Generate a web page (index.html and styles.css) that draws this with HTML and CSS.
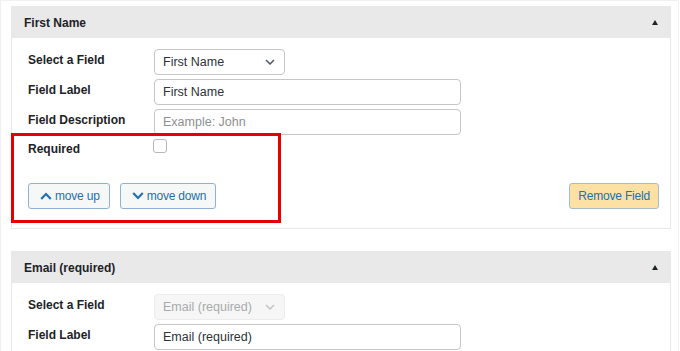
FILE: index.html
```html
<!DOCTYPE html>
<html lang="en">
<head>
<meta charset="utf-8">
<title>Form Fields</title>
<link rel="stylesheet" href="styles.css">
</head>
<body>
<div class="wrap">
  <section class="panel">
    <header class="panel-head">
      <h3 class="title">First Name</h3>
      <span class="toggle" aria-hidden="true"></span>
    </header>
    <div class="panel-body">
      <div class="fields">
        <label class="lbl">Select a Field</label>
        <div class="select"><span>First Name</span><svg class="chev" viewBox="0 0 10 6" width="10" height="6"><path d="M1 1 L5 5 L9 1" fill="none" stroke="#50575e" stroke-width="1.5"/></svg></div>
        <label class="lbl">Field Label</label>
        <div class="input">First Name</div>
        <label class="lbl">Field Description</label>
        <div class="input placeholder">Example: John</div>
        <label class="lbl lbl-req">Required</label>
        <div><span class="checkbox"></span></div>
      </div>
      <div class="actions">
        <div class="moves">
          <button class="btn"><svg viewBox="0 0 12 8" width="12" height="8"><path d="M1.2 7 L6 2 L10.8 7" fill="none" stroke="#2271b1" stroke-width="2.2"/></svg>move up</button>
          <button class="btn"><svg viewBox="0 0 12 8" width="12" height="8"><path d="M1.2 1 L6 6 L10.8 1" fill="none" stroke="#2271b1" stroke-width="2.2"/></svg>move down</button>
        </div>
        <button class="btn btn-remove">Remove Field</button>
      </div>
      <div class="highlight"></div>
    </div>
  </section>

  <section class="panel">
    <header class="panel-head">
      <h3 class="title">Email (required)</h3>
      <span class="toggle" aria-hidden="true"></span>
    </header>
    <div class="panel-body">
      <div class="fields">
        <label class="lbl">Select a Field</label>
        <div class="select disabled"><span>Email (required)</span><svg class="chev" viewBox="0 0 10 6" width="10" height="6"><path d="M1 1 L5 5 L9 1" fill="none" stroke="#c3c4c7" stroke-width="1.5"/></svg></div>
        <label class="lbl">Field Label</label>
        <div class="input">Email (required)</div>
      </div>
    </div>
  </section>
</div>
</body>
</html>
```

FILE: styles.css
```css
* { box-sizing: border-box; }
html, body { margin: 0; padding: 0; background: #fff; }
body {
  font-family: "Liberation Sans", Arial, sans-serif;
  font-size: 12px;
  color: #1d2327;
  overflow: hidden;
}
.wrap {
  width: 679px;
  border: 1px solid #f0f0f0;
  border-bottom: none;
  padding: 5px 7px 0 10px;
}
.panel {
  position: relative;
  border: 1px solid #e8e8e8;
  border-top: none;
  margin-bottom: 22px;
}
.panel-head {
  height: 32px;
  background: #e9e9e9;
  display: flex;
  align-items: center;
  justify-content: space-between;
  padding: 1px 12px 0 12px;
}
.title {
  margin: 0;
  font-size: 12px;
  font-weight: 700;
  color: #1d2327;
}
.toggle {
  width: 0; height: 0;
  border-left: 3px solid transparent;
  border-right: 3px solid transparent;
  border-bottom: 5px solid #1d2327;
  margin-right: 0;
}
.panel-body {
  padding: 11px 11px 19px 16px;
}
.fields {
  display: grid;
  grid-template-columns: 126px auto;
  row-gap: 4px;
  align-items: start;
  justify-items: start;
}
.lbl {
  font-weight: 700;
  line-height: 18px;
  padding-top: 2px;
  color: #1d2327;
}
.lbl-req { padding-top: 1px; }
.select, .input {
  height: 26px;
  border: 1px solid #c6c6c6;
  border-radius: 4px;
  background: #fff;
  color: #2c3338;
  font-size: 12.5px;
  display: flex;
  align-items: center;
  padding: 0 8px;
}
.select {
  width: 131px;
  justify-content: space-between;
  padding-right: 9px;
}
.select.disabled {
  background: #f6f6f6;
  border-color: #ececec;
  color: #a7aaad;
}
.input { width: 307px; }
.input.placeholder { color: #8c8f94; }
.checkbox {
  display: block;
  width: 14px;
  height: 14px;
  border: 1px solid #b8b8b8;
  border-radius: 3px;
  background: #fff;
  margin-left: -1px;
}
.actions {
  margin-top: 25px;
  display: flex;
  justify-content: space-between;
  align-items: center;
}
.moves { display: flex; gap: 10px; }
.btn {
  height: 26px;
  font-family: inherit;
  font-size: 12px;
  letter-spacing: -0.2px;
  color: #2271b1;
  background: #f6f7f7;
  border: 1px solid #8fb2d3;
  border-radius: 3px;
  padding: 0 9px 0 11px;
  display: flex;
  align-items: center;
  gap: 3px;
  cursor: pointer;
}
.btn svg { display: block; }
.btn-remove {
  background: #fde0a3;
  border-color: #a7bccf;
  padding: 0 8px;
}
.highlight {
  position: absolute;
  left: -1px;
  top: 127px;
  width: 270px;
  height: 90px;
  border: 3px solid #e60000;
  pointer-events: none;
}
```
